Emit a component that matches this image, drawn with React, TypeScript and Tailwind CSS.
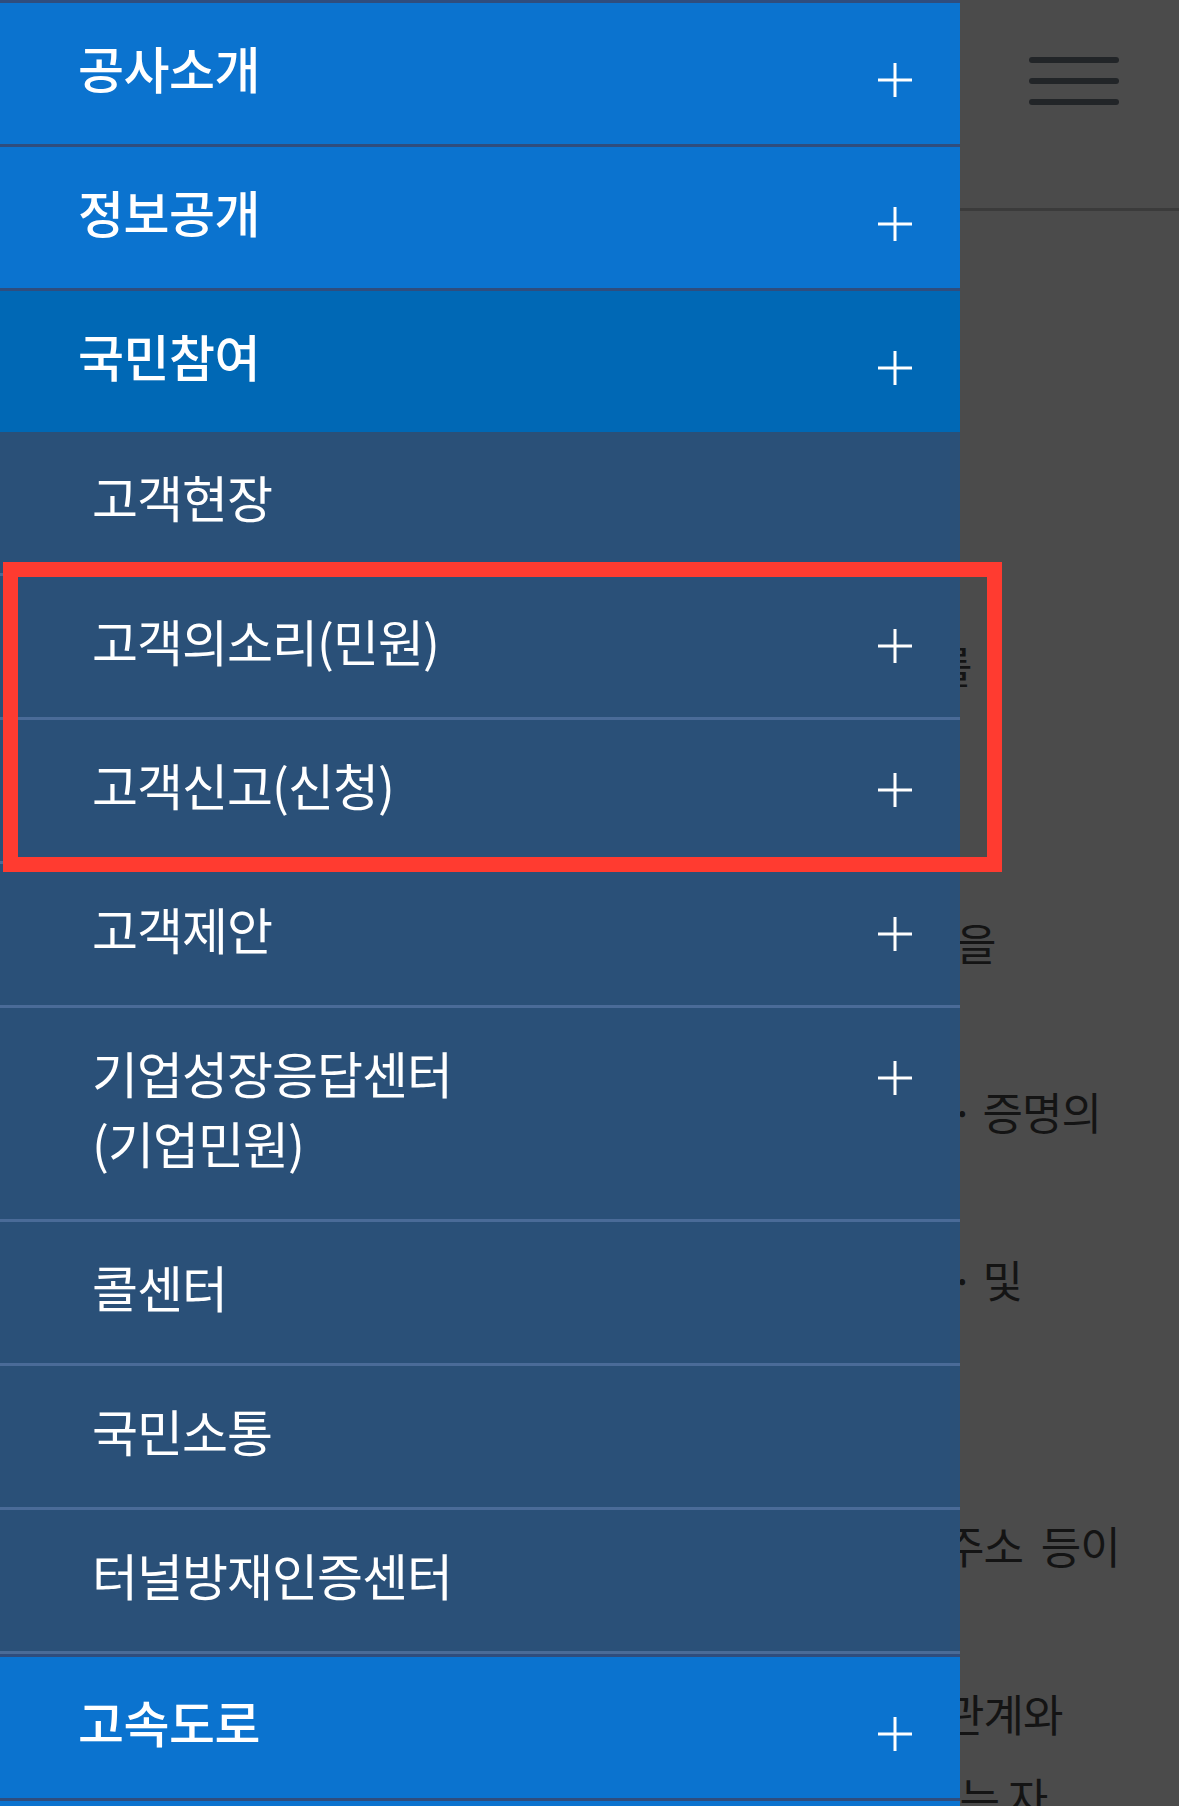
interface SubItem {
    lines: string[];
    more: boolean;
}

const topItems = ['공사소개', '정보공개', '국민참여'];

const subItems: SubItem[] = [
    { lines: ['고객현장'], more: false },
    { lines: ['고객의소리(민원)'], more: true },
    { lines: ['고객신고(신청)'], more: true },
    { lines: ['고객제안'], more: true },
    { lines: ['기업성장응답센터', '(기업민원)'], more: true },
    { lines: ['콜센터'], more: false },
    { lines: ['국민소통'], more: false },
    { lines: ['터널방재인증센터'], more: false },
];

function PlusMark() {
    return (
        <svg width="34" height="34" viewBox="0 0 34 34" className="shrink-0">
            <path d="M17 0V34M0 17H34" stroke="#ffffff" strokeWidth="3" />
        </svg>
    );
}

function TopRow({ label, active }: { label: string; active?: boolean }) {
    return (
        <div
            className={`shrink-0 border-t-[3px] border-[#2f4d7e] h-[144px] flex items-center justify-between pl-[78px] pr-[48px] ${
                active ? 'bg-[#0068b5]' : 'bg-[#0b73cf]'
            }`}
        >
            <span className="text-white text-[50px] tracking-[-0.5px] font-medium leading-[70px] mb-[14px]">{label}</span>
            <div className="mt-[12px]">
                <PlusMark />
            </div>
        </div>
    );
}

export default function App() {
    const font = { fontFamily: '"Noto Sans CJK KR", "Noto Sans", sans-serif' };

    return (
        <div className="relative w-[1179px] h-[1806px] overflow-hidden bg-[#4b4b4b]" style={font}>
            {/* page behind the drawer */}
            <div className="flex flex-col">
                <div className="h-[211px] border-b-[3px] border-[#3b3b3b] flex items-start justify-end pr-[60px] pt-[57px]">
                    <div className="flex flex-col gap-[15px] w-[90px]">
                        <div className="h-[6px] rounded-full bg-[#222528]" />
                        <div className="h-[6px] rounded-full bg-[#222528]" />
                        <div className="h-[6px] rounded-full bg-[#222528]" />
                    </div>
                </div>
                <div className="flex flex-col text-[44px] tracking-[-1px] text-[#141414] leading-[60px] whitespace-nowrap">
                    <div className="mt-[424px] pl-[932px]">를</div>
                    <div className="mt-[217px] pl-[956px]">을</div>
                    <div className="mt-[109px] pl-[950px]">· 증명의</div>
                    <div className="mt-[108px] pl-[950px]">· 및</div>
                    <div className="mt-[206px] pl-[944px]">주소&nbsp; 등이</div>
                    <div className="mt-[108px] pl-[944px]">관계와</div>
                    <div className="mt-[24px] pl-[920px]">하는 자</div>
                </div>
            </div>

            {/* drawer */}
            <div className="absolute left-0 top-0 w-[960px] h-full flex flex-col bg-[#2a5078]">
                <TopRow label={topItems[0]} />
                <TopRow label={topItems[1]} />
                <TopRow label={topItems[2]} active />
                {subItems.map((item, i) => (
                    <div
                        key={i}
                        className="shrink-0 flex justify-between pl-[92px] pr-[48px] pt-[35px] pb-[36px] border-b-[3px] border-[#4a6b98]"
                    >
                        <div className="flex flex-col text-white text-[50px] tracking-[-1px] leading-[70px] -translate-y-[6px]">
                            {item.lines.map((l) => (
                                <span key={l}>{l}</span>
                            ))}
                        </div>
                        {item.more && (
                            <div className="h-[70px] flex items-center">
                                <PlusMark />
                            </div>
                        )}
                    </div>
                ))}
                <TopRow label="고속도로" />
                <TopRow label="" />
            </div>

            {/* highlight frame */}
            <div className="absolute left-[3px] top-[562px] w-[999px] h-[310px] border-[15px] border-[#ff3b30]" />
        </div>
    );
}
